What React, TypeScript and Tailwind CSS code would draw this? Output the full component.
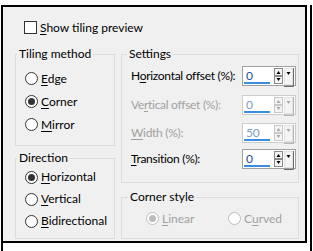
import React from 'react';

const font = "font-['Segoe_UI','Lato','Liberation_Sans',sans-serif]";

function Radio({ checked, disabled }: { checked?: boolean; disabled?: boolean }) {
  return (
    <span
      className={
        'w-[13px] h-[13px] rounded-full border flex items-center justify-center shrink-0 bg-white ' +
        (disabled ? 'border-[#bcbcbc]' : 'border-[#333]')
      }
    >
      {checked && <span className={'w-[7px] h-[7px] rounded-full ' + (disabled ? 'bg-[#bcbcbc]' : 'bg-[#333]')} />}
    </span>
  );
}

// label with an underlined access key
function Key({ pre = '', k, post = '' }: { pre?: string; k: string; post?: string }) {
  return (
    <span className="whitespace-nowrap">
      {pre}
      <span className="underline underline-offset-[2px] decoration-[1px]">{k}</span>
      {post}
    </span>
  );
}

function RadioRow({ checked, children }: { checked?: boolean; children: React.ReactNode }) {
  return (
    <div className="h-[23px] flex items-center gap-[3px]">
      <Radio checked={checked} />
      {children}
    </div>
  );
}

function Spin({ disabled }: { disabled?: boolean }) {
  const ink = disabled ? '#a8a8a8' : '#000';
  const edge = disabled ? '#c8c8c8' : '#8a8a8a';
  return (
    <svg width="21" height="19" viewBox="0 0 21 19" className="shrink-0">
      <rect x="0.5" y="0.5" width="8" height="7" fill="#f4f4f4" stroke={edge} />
      <path d="M2.5 6 L4.5 3 L6.5 6 Z" fill={ink} />
      <rect x="0.5" y="8.5" width="8" height="7" fill="#f4f4f4" stroke={edge} />
      <path d="M2.5 10 L6.5 10 L4.5 13 Z" fill={ink} />
      <rect x="10.5" y="0.5" width="8" height="16" fill="#f4f4f4" stroke="#e2e2e2" />
      <path d="M19.5 0 V18.5 H10" fill="none" stroke={disabled ? '#b4b4b4' : '#6a6a6a'} />
      <path d="M12.5 4 L16.5 4 L14.5 7 Z" fill={ink} />
    </svg>
  );
}

function NumBox({ value, disabled }: { value: string; disabled?: boolean }) {
  return (
    <div
      className={
        'w-[54px] h-[20px] border bg-white flex items-start shrink-0 ' +
        (disabled ? 'border-[#cccccc]' : 'border-[#a0a0a0]')
      }
    >
      <div className="relative flex-1 h-full">
        <span
          className={
            'block pl-[3px] text-[12px] leading-[17px] ' + (disabled ? 'text-[#7d9cc2]' : 'text-[#1d4f98]')
          }
        >
          {value}
        </span>
        <span className="absolute left-[1px] bottom-[1px] w-[26px] h-[2px] bg-[#3b8de0]" />
      </div>
      <div className="pt-[1px]">
        <Spin disabled={disabled} />
      </div>
    </div>
  );
}

function Group({ title, className, legendClass, children }: { title: string; className: string; legendClass: string; children: React.ReactNode }) {
  return (
    <fieldset className={'border border-[#dcdcdc] ' + className}>
      <legend className={'px-[2px] leading-[16px] ' + legendClass}>{title}</legend>
      {children}
    </fieldset>
  );
}

export default function App() {
  return (
    <div className={'w-[313px] h-[251px] bg-white text-[12px] text-black ' + font}>
      <div className="ml-[1px] w-[311px] h-[250px] border-l-2 border-r-2 border-b-2 border-black">
        <div className="mt-[5px] w-[304px] h-[238px] border-t-2 border-r-2 border-b-2 border-black bg-[#f0f0f0]">
          <div className="mt-[14px] pl-[21px] h-[13px] flex items-center gap-[3px]">
            <span className="w-[13px] h-[13px] border border-[#333] bg-white" />
            <Key k="S" post="how tiling preview" />
          </div>

          <div className="mt-[12px] ml-[12px] flex gap-[6px]">
            <div className="w-[100px] flex flex-col">
              <Group title="Tiling method" className="h-[100px]" legendClass="ml-[1px]">
                <div className="pl-[9px] pt-[5px]">
                  <RadioRow><Key k="E" post="dge" /></RadioRow>
                  <RadioRow checked><Key k="C" post="orner" /></RadioRow>
                  <RadioRow><Key k="M" post="irror" /></RadioRow>
                </div>
              </Group>
              <Group title="Direction" className="mt-[4px] h-[89px]" legendClass="ml-[1px]">
                <div className="pl-[9px] [&>div]:h-[22px]">
                  <RadioRow checked><Key k="H" post="orizontal" /></RadioRow>
                  <RadioRow><Key k="V" post="ertical" /></RadioRow>
                  <RadioRow><Key k="B" post="idirectional" /></RadioRow>
                </div>
              </Group>
            </div>

            <div className="w-[178px] flex flex-col">
              <Group title="Settings" className="h-[137px]" legendClass="ml-[5px]">
                <div className="pl-[9px] pr-[2px] tracking-[-0.3px]">
                  <div className="mt-[4px] flex items-center justify-between">
                    <Key pre="H" k="o" post="rizontal offset (%):" />
                    <NumBox value="0" />
                  </div>
                  <div className="mt-[9px] flex items-center justify-between text-[#a0a0a0]">
                    <Key pre="Ve" k="r" post="tical offset (%):" />
                    <NumBox value="0" disabled />
                  </div>
                  <div className="mt-[8px] flex items-center justify-between text-[#a0a0a0]">
                    <Key k="W" post="idth (%):" />
                    <NumBox value="50" disabled />
                  </div>
                  <div className="mt-[6px] flex items-center justify-between">
                    <Key k="T" post="ransition (%):" />
                    <NumBox value="0" />
                  </div>
                </div>
              </Group>
              <Group title="Corner style" className="mt-[6px] h-[50px]" legendClass="ml-[6px]">
                <div className="pl-[24px] mt-[7px] h-[13px] flex items-center text-[#a0a0a0]">
                  <div className="w-[82px] flex items-center gap-[3px]">
                    <Radio checked disabled />
                    <Key k="L" post="inear" />
                  </div>
                  <div className="flex items-center gap-[3px]">
                    <Radio disabled />
                    <Key pre="C" k="u" post="rved" />
                  </div>
                </div>
              </Group>
            </div>
          </div>
        </div>
      </div>
    </div>
  );
}
